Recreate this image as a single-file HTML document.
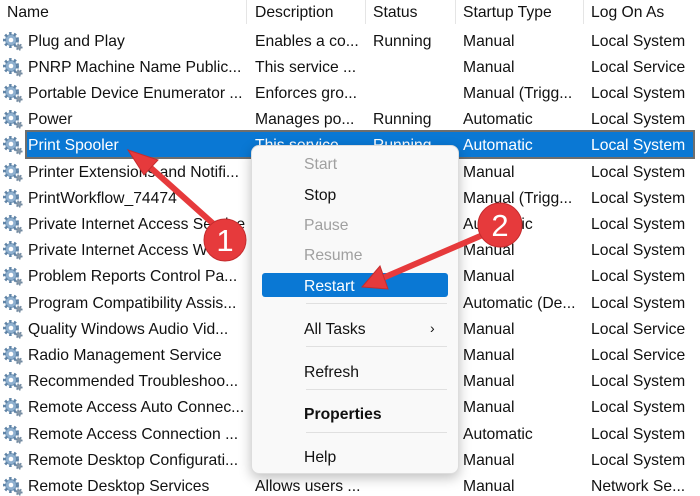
<!DOCTYPE html>
<html><head><meta charset="utf-8"><style>
body{margin:0;width:700px;height:496px;overflow:hidden;background:#fff;font-family:"Liberation Sans",sans-serif;font-size:15.7px;color:#111;position:relative}
.t{position:absolute;white-space:nowrap;line-height:18px;margin-top:1.5px}
.vl{position:absolute;top:0;height:24px;width:1px;background:#e5e5e5}
.sel{position:absolute;left:25px;top:130px;width:666px;height:25px;background:#0a78d4;border:2px solid #6e6e6e;border-left-width:2px}
.menu{position:absolute;left:251px;top:145px;width:206px;height:327px;background:#f9f9f9;border:1px solid #ddd;border-radius:8px;box-shadow:0 4px 12px rgba(0,0,0,.25)}
.mi{position:absolute;left:52px;line-height:18px;margin-top:1px}
.sep{position:absolute;left:54px;width:141px;height:1px;background:#e0e0e0}
.g{color:#a0a0a0}
</style></head><body>
<div class="sel"></div>
<div class="vl" style="left:246px"></div><div class="vl" style="left:365px"></div><div class="vl" style="left:455px"></div><div class="vl" style="left:583px"></div>
<div class="t" style="left:7px;top:2px">Name</div>
<div class="t" style="left:255px;top:2px">Description</div>
<div class="t" style="left:373px;top:2px">Status</div>
<div class="t" style="left:463px;top:2px">Startup Type</div>
<div class="t" style="left:591px;top:2px">Log On As</div>
<svg width="30" height="496" style="position:absolute;left:0;top:0">
<defs><g id="gear">
<circle cx="11" cy="9" r="6" fill="#7fa2c2" stroke="#5f83a6" stroke-width="4" stroke-dasharray="2.2 2.2"/>
<circle cx="11" cy="9" r="5" fill="#8fb0cf"/>
<circle cx="11" cy="9" r="2.3" fill="#fff"/>
<circle cx="19" cy="16" r="2.6" fill="#89a" stroke="#6f88a0" stroke-width="2" stroke-dasharray="1.3 1.3"/>
</g></defs>
<use href="#gear" y="31"/><use href="#gear" y="57"/><use href="#gear" y="83"/><use href="#gear" y="109"/><use href="#gear" y="135"/><use href="#gear" y="162"/><use href="#gear" y="188"/><use href="#gear" y="214"/><use href="#gear" y="240"/><use href="#gear" y="266"/><use href="#gear" y="293"/><use href="#gear" y="319"/><use href="#gear" y="345"/><use href="#gear" y="371"/><use href="#gear" y="397"/><use href="#gear" y="424"/><use href="#gear" y="450"/><use href="#gear" y="476"/>
</svg>
<div style="position:absolute;left:28px;top:0">
<div class="t" style="top:31px">Plug and Play</div>
<div class="t" style="top:57px">PNRP Machine Name Public...</div>
<div class="t" style="top:83px">Portable Device Enumerator ...</div>
<div class="t" style="top:109px">Power</div>
<div class="t" style="top:135px;color:#fff">Print Spooler</div>
<div class="t" style="top:162px">Printer Extensions and Notifi...</div>
<div class="t" style="top:188px">PrintWorkflow_74474</div>
<div class="t" style="top:214px">Private Internet Access Service</div>
<div class="t" style="top:240px">Private Internet Access WG</div>
<div class="t" style="top:266px">Problem Reports Control Pa...</div>
<div class="t" style="top:293px">Program Compatibility Assis...</div>
<div class="t" style="top:319px">Quality Windows Audio Vid...</div>
<div class="t" style="top:345px">Radio Management Service</div>
<div class="t" style="top:371px">Recommended Troubleshoo...</div>
<div class="t" style="top:397px">Remote Access Auto Connec...</div>
<div class="t" style="top:424px">Remote Access Connection ...</div>
<div class="t" style="top:450px">Remote Desktop Configurati...</div>
<div class="t" style="top:476px">Remote Desktop Services</div>
</div>
<div class="t" style="left:255px;top:31px">Enables a co...</div>
<div class="t" style="left:255px;top:57px">This service ...</div>
<div class="t" style="left:255px;top:83px">Enforces gro...</div>
<div class="t" style="left:255px;top:109px">Manages po...</div>
<div class="t" style="left:255px;top:135px;color:#fff">This service ...</div>
<div class="t" style="left:255px;top:476px">Allows users ...</div>
<div class="t" style="left:373px;top:31px">Running</div>
<div class="t" style="left:373px;top:109px">Running</div>
<div class="t" style="left:373px;top:135px;color:#fff">Running</div>
<div style="position:absolute;left:463px;top:0">
<div class="t" style="top:31px">Manual</div><div class="t" style="top:57px">Manual</div><div class="t" style="top:83px">Manual (Trigg...</div><div class="t" style="top:109px">Automatic</div><div class="t" style="top:135px;color:#fff">Automatic</div><div class="t" style="top:162px">Manual</div><div class="t" style="top:188px">Manual (Trigg...</div><div class="t" style="top:214px">Automatic</div><div class="t" style="top:240px">Manual</div><div class="t" style="top:266px">Manual</div><div class="t" style="top:293px">Automatic (De...</div><div class="t" style="top:319px">Manual</div><div class="t" style="top:345px">Manual</div><div class="t" style="top:371px">Manual</div><div class="t" style="top:397px">Manual</div><div class="t" style="top:424px">Automatic</div><div class="t" style="top:450px">Manual</div><div class="t" style="top:476px">Manual</div>
</div>
<div style="position:absolute;left:591px;top:0">
<div class="t" style="top:31px">Local System</div><div class="t" style="top:57px">Local Service</div><div class="t" style="top:83px">Local System</div><div class="t" style="top:109px">Local System</div><div class="t" style="top:135px;color:#fff">Local System</div><div class="t" style="top:162px">Local System</div><div class="t" style="top:188px">Local System</div><div class="t" style="top:214px">Local System</div><div class="t" style="top:240px">Local System</div><div class="t" style="top:266px">Local System</div><div class="t" style="top:293px">Local System</div><div class="t" style="top:319px">Local Service</div><div class="t" style="top:345px">Local Service</div><div class="t" style="top:371px">Local System</div><div class="t" style="top:397px">Local System</div><div class="t" style="top:424px">Local System</div><div class="t" style="top:450px">Local System</div><div class="t" style="top:476px">Network Se...</div>
</div>
<div class="menu">
<div class="mi g" style="top:9px">Start</div>
<div class="mi" style="top:40px">Stop</div>
<div class="mi g" style="top:70px">Pause</div>
<div class="mi g" style="top:100px">Resume</div>
<div style="position:absolute;left:10px;top:127px;width:186px;height:24px;background:#0a78d4;border-radius:3px"></div>
<div class="mi" style="top:131px;color:#fff">Restart</div>
<div class="sep" style="top:157px"></div>
<div class="mi" style="top:174px">All Tasks</div><div class="mi" style="top:172px;left:178px;font-size:14px">›</div>
<div class="sep" style="top:200px"></div>
<div class="mi" style="top:217px">Refresh</div>
<div class="sep" style="top:243px"></div>
<div class="mi" style="top:259px;font-weight:bold">Properties</div>
<div class="sep" style="top:286px"></div>
<div class="mi" style="top:302px">Help</div>
</div>
<svg width="700" height="496" style="position:absolute;left:0;top:0">
<g fill="#e63a3c" stroke="#c42c2e" stroke-width="1">
<line x1="218" y1="228" x2="142" y2="160" stroke="#e63a3c" stroke-width="6"/>
<polygon points="128,150 158,160 144,175"/>
<line x1="485" y1="234" x2="378" y2="280" stroke="#e63a3c" stroke-width="6"/>
<polygon points="362,287 380,266 388,289"/>
<circle cx="225" cy="240" r="21"/>
<circle cx="500" cy="225" r="22"/>
</g>
<text x="225" y="251" font-family="Liberation Sans" font-size="31" fill="#fff" text-anchor="middle">1</text>
<text x="500" y="236" font-family="Liberation Sans" font-size="31" fill="#fff" text-anchor="middle">2</text>
</svg>
</body></html>
